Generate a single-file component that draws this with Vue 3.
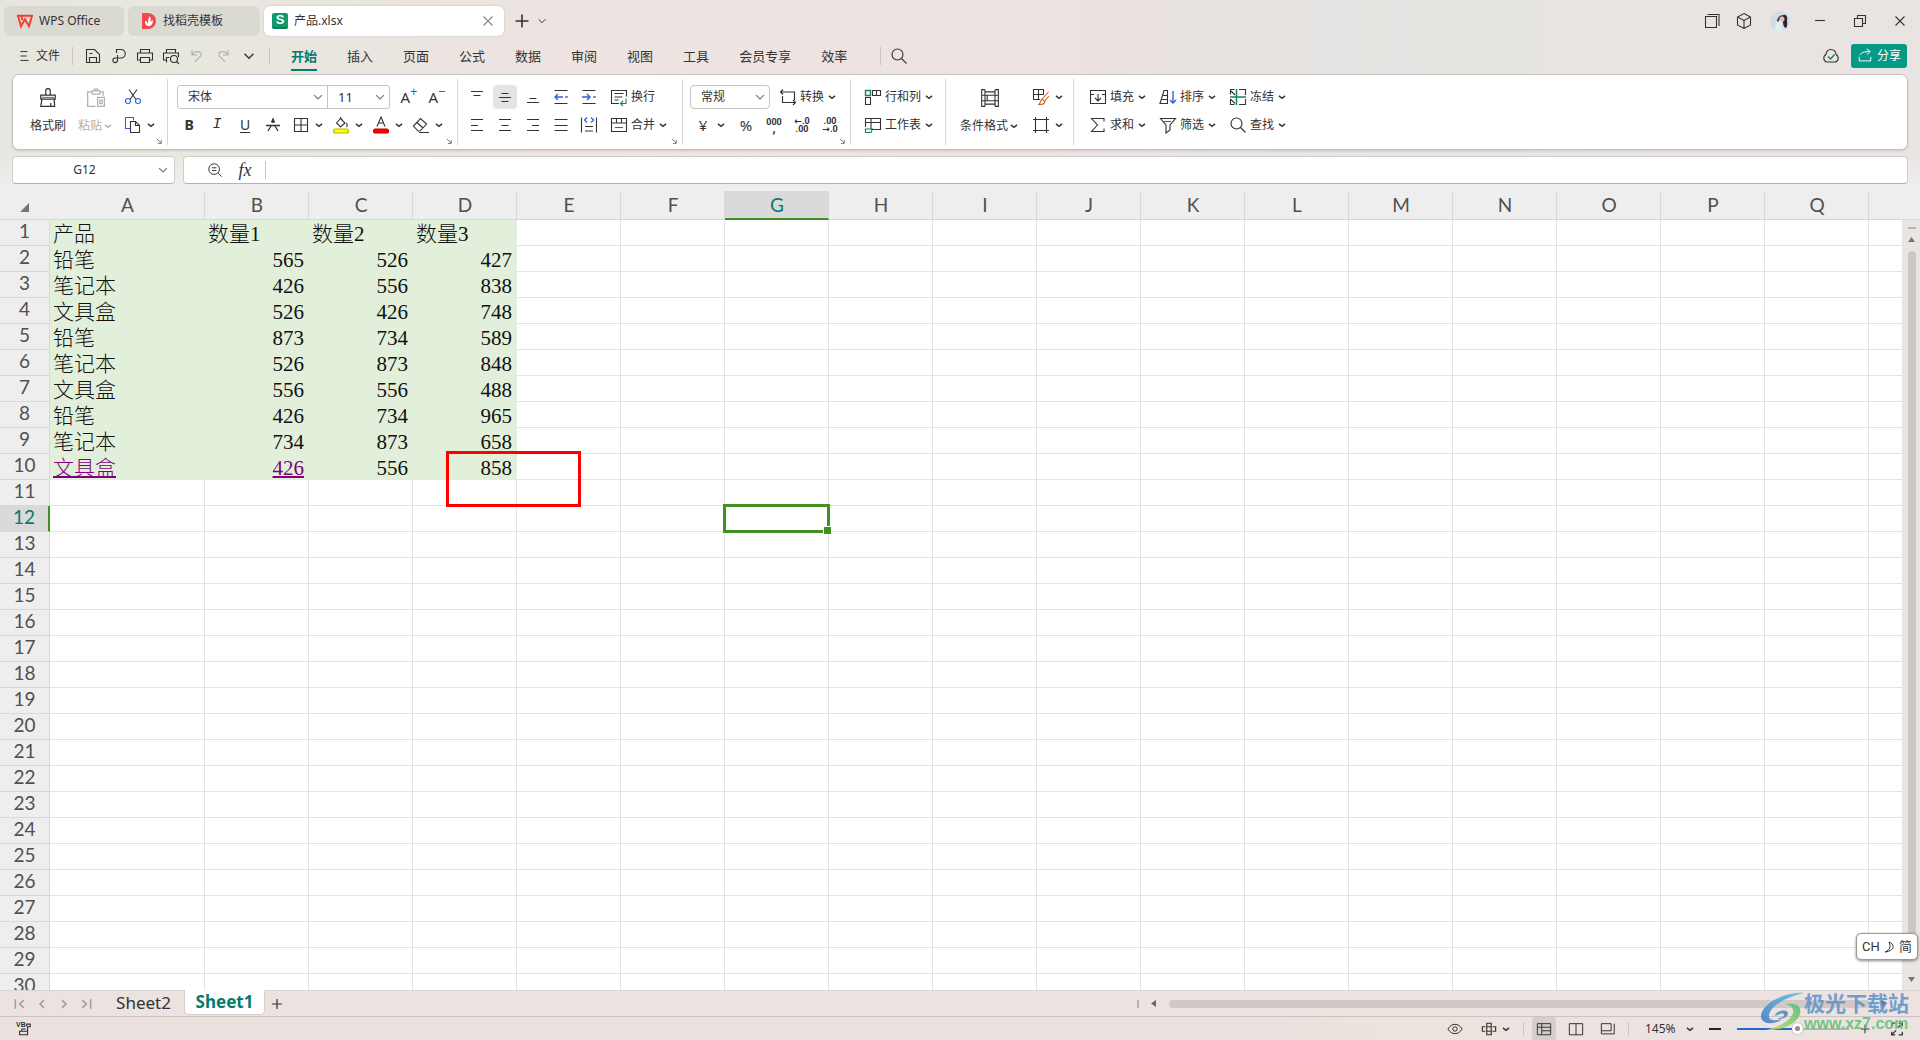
<script setup>
import { h, ref } from 'vue'

const G = '#12855f'
const B = '#2f62d9'

// Each glyph is drawn on an 18 x 18 grid.
const glyphs = {
  chev: '<path d="M3.500 7l5.500 4.500L14.500 7" stroke-width="2.600"/>',
  caret: '<path d="M4 6.500l5 5 5-5" stroke-width="1.500"/>',
  burger: '<path d="M5 4h8M5 9h7M5 14h9"/>',
  save: '<path d="M2.500 15.500v-13h8l5 5v8zM5.500 15.500v-5h7v5M5.500 6.500h3"/>',
  exportf: '<path d="M6.500 6V2.500h4.500a4 4 0 0 1 0 8.500H5a2.300 2.300 0 1 0 2.500 2.300V8"/>',
  print: '<path d="M4.500 6V2.500h9V6M4.500 13h-3V6h15v7h-3M4.500 10.500h9v5h-9z"/>',
  preview: '<path d="M4.500 6V2.500h9V6M5 13H1.500V6h15v4M4.500 15.500v-5h3"/><circle cx="12" cy="12" r="3.500"/><path d="M14.500 14.500l2.500 2.500"/>',
  undo: '<path d="M4 3v5h5M4 8c3-5 10-4 9 0-.500 2-3 3-6 7"/>',
  redo: '<path d="M14 3v5H9M14 8c-3-5-10-4-9 0 .500 2 3 3 6 7"/>',
  search: '<circle cx="7.500" cy="7.500" r="5.500"/><path d="M11.500 11.500l5 5"/>',
  plus: '<path d="M9 2.500v13M2.500 9h13" stroke-width="1.600"/>',
  close: '<path d="M4.500 4.500l9 9M13.500 4.500l-9 9"/>',
  min: '<path d="M4 8.500h10"/>',
  restore: '<path d="M3.500 6.500h8v8h-8zM6.500 6.500v-3h8v8h-3"/>',
  windows: '<path d="M2.500 4.500h11v11h-11zM4.500 2.500h11.500v11.500"/>',
  cube: '<path d="M9 1.500l6.500 3.500v8L9 16.500 2.500 13V5zM2.500 5L9 8.500 15.500 5M9 8.500v8"/>',
  cloud: `<path d="M5 15a4 4 0 0 1-1-7.500 5 5 0 0 1 10 0A4 4 0 0 1 13 15z"/><path d="M6 9.500l2.500 2.500 4-4.500" stroke="${G}" stroke-width="1.400"/>`,
  share: '<path d="M2.500 10v4.500h13V10M3 8c2-3 5-4 11-4M11 1l4 3-4 3.500"/>',
  cut: `<path d="M5 1.500l7 10M13 1.500l-7 10"/><g stroke="${B}"><circle cx="4" cy="13" r="2.500"/><circle cx="14" cy="13" r="2.500"/></g>`,
  copy: `<path d="M6 12.500H1.500v-11h8v3" stroke="${B}"/><path d="M6.500 5.500h5l4 4v7h-9zM11.500 5.500v4h4"/>`,
  grid: '<path d="M2.500 2.500h13v13h-13zM9 2.500v13M2.500 9h13"/>',
  fill: '<path d="M4.500 7l4-4.500 4.500 4.500-4.500 4zM8 1l3 4M14.500 7c1 2 1 3 0 4"/><rect x="1.500" y="13" width="15" height="4" rx="2" fill="#ff0" stroke="#b8b800"/>',
  color: '<path d="M5 10.500L9 1l4 9.500M6.500 7h5"/><rect x="1.500" y="13" width="15" height="4" rx="2" fill="#f00" stroke="#b00"/>',
  eraser: '<path d="M1.500 10l7-7.500 6 5.500-6.500 7H6zM5 6.500l6 5.500M7 16.500h10"/>',
  strikeA: '<path d="M4 15l3-5M9 7V5M14 15l-3-5M2 9.500h14M7.500 6.500L9 3l1.500 3.500" stroke-width="1.300"/>',
  top: '<path d="M3 3.500h12M5.500 7.500h7"/>',
  mid: '<path d="M5.500 5.500h7M3 9.500h12M5.500 13.500h7"/>',
  bottom: '<path d="M5.500 10.500h7M3 14.500h12"/>',
  left: '<path d="M3 3.500h12M3 9.500h7M3 14.500h12"/>',
  center: '<path d="M3 3.500h12M5.500 9.500h7M3 14.500h12"/>',
  right: '<path d="M3 3.500h12M8 9.500h7M3 14.500h12"/>',
  justify: '<path d="M2.500 3.500h13M2.500 9.500h13M2.500 14.500h13"/>',
  spread: `<path d="M1.500 1.500v15M16.500 1.500v15M5 10.500h8M5 15h8"/><path d="M7 1.500L4.500 4 7 6.500M11 1.500L13.500 4 11 6.500" stroke="${B}" stroke-width="1.300"/>`,
  outdent: `<path d="M2.500 2.500h13M2.500 15.500h13M13 9h3"/><path d="M11 9H3M6 6L3 9l3 3" stroke="${B}" stroke-width="1.400"/>`,
  indent: `<path d="M2.500 2.500h13M2.500 15.500h13M13 9h3"/><path d="M2 9h8M7 6l3 3-3 3" stroke="${B}" stroke-width="1.400"/>`,
  wrap: `<path d="M9 15.500H1.500v-13h15v6M4.500 5.500h9M4.500 9h8M4.500 12h4"/><path d="M16 10.500v5h-5M13 13l-2.500 2.500L13 18" stroke="${G}"/>`,
  merge: `<path d="M1.500 2.500h15v13h-15zM1.500 7h15M6.500 2.500V7M11.500 2.500V7"/><path d="M5 11.500h8" stroke="${G}"/>`,
  convert: '<path d="M4 1.500L1.500 4 4 6.500M1.500 4h14v8M3.500 8v6.500h13M14 12l2.500 2.500L14 17"/>',
  rowcol: `<path d="M1.500 2.500h5v5h-5z" stroke="${G}" stroke-width="1.400"/><path d="M8.500 2.500h8v5h-8zM12.500 2.500v5M1.500 9.500h5v7h-5z"/>`,
  sheet: `<path d="M7 13.500h9.500v-11h-15V11M1.500 6.500h15M7 2.500v11"/><path d="M1.500 13h7l-1.500 3.500H1.500z" stroke="${G}"/>`,
  cond: '<path d="M4.500 1.500h-3v15h3M13.500 1.500h3v15h-3M4.500 1.500v15M13.500 1.500v15M4.500 3.500h9M4.500 14.500h9M1.500 6.500h12M1.500 11.500h12M13.500 6.500h3M13.500 11.500h3M6.500 6.500v5" stroke-width="1"/>',
  style: '<path d="M8 11.500H1.500v-10h10V7M1.500 6.500h10M6.500 1.500v10"/><path d="M16.500 4l-6 6.500M17 8l-4 4.500M10 11l3 2.500c-1 3-3 3-6 3 2-2 1-4 3-5.500z" stroke="#c9642a"/>',
  frame: '<path d="M3.500 1v16M14.500 1v16M1 3.500h16M1 14.500h16"/>',
  infill: '<path d="M5 6.500H1.500v-4h15v4H13M1.500 6.500v9h15v-9M9 6v7M6 10l3 3 3-3"/>',
  sum: '<path d="M15 5.500V2.500H2.500l6 6.500-6 6.500H15v-3"/>',
  sort: `<path d="M1 15.500L5 2.500h3.500v13zM4 7.500h4.500M3 11.500h5.500"/><path d="M14 3v12M11 12l3 3 3-3" stroke="${B}" stroke-width="1.400"/>`,
  filter: `<path d="M1.500 2.500h15L11 9v5l-4 3V9z"/><path d="M5 5.500h7" stroke="${G}"/>`,
  freeze: `<path d="M1.500 6.500v-5h4M10 1.500h6.500V7M10 16.500h6.500V11M5.500 16.500h-4V11M2 3l4 4M2 11.500l4 4"/><path d="M7.500 1v16M1 9h16" stroke="${G}" stroke-width="1.500"/>`,
  brush: '<path d="M7 6.500V2.500a2 2 0 0 1 4 0v4M2.500 6.500h13V10h-13zM3.500 10l-1 6.500h12.500l-.500-6.500M11.500 16.500v-3"/><path d="M3.500 8.500h11" stroke="#d2622a"/>',
  paste: '<path d="M5.500 3.500H1.500v13h7M12.500 3.500h3V7M5.500 2.500h7v3h-7zM7.500 2.500V1h3v1.500M10.500 8.500h6v8h-6zM12.500 11h2v3h-2z"/>',
  zoomf: '<circle cx="8" cy="8" r="6"/><path d="M12.500 12.500l4 4M5.500 6.500h5M5.500 9.500h5"/>',
  corner: '<path d="M2 2l11 11M13.500 5v9H5" stroke-width="2.500"/>',
  first: '<path d="M3 3v12M14 4L8.500 9l5.500 5" stroke-width="2"/>',
  prev: '<path d="M11.500 4L6.500 9l5 5" stroke-width="2"/>',
  next: '<path d="M6.500 4l5 5-5 5" stroke-width="2"/>',
  last: '<path d="M15 3v12M4 4l5.500 5L4 14" stroke-width="2"/>',
  eye: '<path d="M1 9c4-7 12-7 16 0-4 7-12 7-16 0z"/><circle cx="9" cy="9" r="2.500"/>',
  cross: '<path d="M6.500 6V2.500h5V6M6.500 12v3.500h5V12M5 6.500H1.500v5H5M13 6.500h3.500v5H13M6.500 6.500h5v5h-5z" stroke-width="1.300"/>',
  vnormal: '<path d="M1.500 3h15v12.500h-15zM1.500 7h15M6.500 3v12.500M6.500 11h10"/>',
  vpage: '<path d="M1.500 3h15v12.500h-15zM9 3v12.500"/>',
  vread: '<path d="M1.500 3h11v8h-11zM16 3v11.500H1.500V11"/>',
  full: '<path d="M3 6V2.500h4M11 15.500h4V12M15 2.500l-5 5M11 2.500h4V6M3 15.500l5-5M3 12v3.500h4" stroke-width="1.400"/>',
  macro: '<path d="M12 6V3.500h4v3h-3v9H4v-4h9M6.500 11.500V9H11" stroke-width="1.300"/>',
  wps: '<path d="M1 3h16l-3.500 12L9 7l-4.500 8L1 3h4l1 5" stroke="#f2402f" stroke-width="2.200"/>'
}

const Icon = (props) =>
  h('svg', {
    viewBox: '0 0 18 18',
    width: props.size || 18,
    height: props.size || 18,
    fill: 'none',
    stroke: 'currentColor',
    'stroke-width': 1.1,
    'aria-hidden': 'true',
    innerHTML: glyphs[props.name]
  })
Icon.props = ['name', 'size']

const quick = ['save', 'exportf', 'print', 'preview']
const menus = ['开始', '插入', '页面', '公式', '数据', '审阅', '视图', '工具', '会员专享', '效率']
const columns = 'ABCDEFGHIJKLMNOPQ'.split('')
const data = [
  ['产品', '数量1', '数量2', '数量3'],
  ['铅笔', 565, 526, 427],
  ['笔记本', 426, 556, 838],
  ['文具盒', 526, 426, 748],
  ['铅笔', 873, 734, 589],
  ['笔记本', 526, 873, 848],
  ['文具盒', 556, 556, 488],
  ['铅笔', 426, 734, 965],
  ['笔记本', 734, 873, 658],
  ['文具盒', 426, 556, 858]
]
const cell = (r, c) => (data[r - 1] ? data[r - 1][c] : undefined)
const isLink = (r, c) => r === 10 && c < 2
const cellClass = (r, c) => ({
  filled: r <= 10 && c < 4,
  num: typeof cell(r, c) === 'number'
})
const zoom = ref(54)
const nameBox = ref('G12')
</script>

<template>
  <div class="app">
    <header class="titlebar">
      <button class="doc-tab t-home"><Icon name="wps" :size="16" />WPS Office</button>
      <button class="doc-tab t-shop"><svg viewBox="0 0 14 16" width="14" height="16"><path d="M0 0h6a8 8 0 0 1 0 16H0z" fill="#f2494f" /><path d="M3 8c2 0 2 1 3 3 0-3 0-5 2-8 1 3 1 4 0 6l3-2c0 4-2 6-4 6-3 0-4-2-4-5z" fill="#fff" /></svg>找稻壳模板</button>
      <div class="doc-tab t-file">
        <span class="s-logo">S</span>产品.xlsx
        <button class="tab-close" aria-label="关闭"><Icon name="close" /></button>
      </div>
      <button class="ib add" aria-label="新建"><Icon name="plus" /></button>
      <button class="ib narrow" aria-label="更多"><Icon name="caret" :size="12" /></button>
      <div class="grow"></div>
      <button class="ib w32" aria-label="窗口"><Icon name="windows" /></button>
      <button class="ib w32" aria-label="应用"><Icon name="cube" /></button>
      <button class="ib w40" aria-label="账号">
        <svg viewBox="0 0 20 20" width="20" height="20"><circle cx="10" cy="10" r="10" fill="#cfdde6" /><path d="M5 19c0-5 2-9 6-9l2 10z" fill="#e3eef3" /><path d="M12 5c3-3 6 0 5 4 0 3 1 5-1 8-3-1-3-5-3-8z" fill="#2c2430" /><path d="M7 10c0-3 3-6 6-6l-3 4-2 3z" fill="#4b3a42" /><circle cx="12" cy="8" r="2.500" fill="#e2bfb0" /></svg>
      </button>
      <button class="ib w40" aria-label="最小化"><Icon name="min" /></button>
      <button class="ib w40" aria-label="还原"><Icon name="restore" /></button>
      <button class="ib w40" aria-label="关闭窗口"><Icon name="close" /></button>
    </header>

    <nav class="menubar">
      <button class="file"><Icon name="burger" :size="16" />文件</button>
      <i class="bar"></i>
      <div class="quick">
        <button v-for="q in quick" :key="q" class="ib w26" :aria-label="q"><Icon :name="q" /></button>
        <button class="ib w26 dim" aria-label="撤销"><Icon name="undo" /></button>
        <button class="ib w26 dim" aria-label="恢复"><Icon name="redo" /></button>
        <button class="ib w26" aria-label="更多命令"><Icon name="caret" :size="16" /></button>
      </div>
      <i class="bar"></i>
      <div class="menus">
        <button v-for="(m, i) in menus" :key="m" :class="{ active: i === 0 }">{{ m }}</button>
      </div>
      <i class="bar"></i>
      <button class="ib w36" aria-label="搜索"><Icon name="search" /></button>
      <div class="grow"></div>
      <button class="ib w40" aria-label="已同步"><Icon name="cloud" /></button>
      <button class="share"><Icon name="share" :size="16" />分享</button>
    </nav>

    <section class="ribbon">
      <div class="group g-clip">
        <button class="big"><Icon name="brush" :size="20" /><span>格式刷</span></button>
        <button class="big dim"><Icon name="paste" :size="20" /><span>粘贴<Icon name="chev" :size="10" /></span></button>
        <div class="rows">
          <div class="row"><button class="ib w28" aria-label="剪切"><Icon name="cut" /></button></div>
          <div class="row"><button class="drop" aria-label="复制"><Icon name="copy" /><Icon name="chev" :size="10" /></button></div>
        </div>
        <Icon class="corner" name="corner" :size="7" />
      </div>
      <div class="group g-font">
        <div class="rows">
          <div class="row">
            <div class="fontbox">
              <label class="pick family"><select aria-label="字体"><option>宋体</option></select><Icon name="caret" :size="14" /></label>
              <label class="pick fsize"><select aria-label="字号"><option>11</option></select><Icon name="caret" :size="14" /></label>
            </div>
            <button class="ib w28 letter" aria-label="增大字号">A<sup>+</sup></button>
            <button class="ib w28 letter" aria-label="减小字号">A<sup>−</sup></button>
          </div>
          <div class="row">
            <button class="ib w28 fmt b">B</button>
            <button class="ib w28 fmt i">I</button>
            <button class="ib w28 fmt u">U</button>
            <button class="ib w28" aria-label="删除线"><Icon name="strikeA" /></button>
            <button v-for="k in ['grid', 'fill', 'color', 'eraser']" :key="k" class="drop" :aria-label="k"><Icon :name="k" /><Icon name="chev" :size="10" /></button>
          </div>
        </div>
        <Icon class="corner" name="corner" :size="7" />
      </div>
      <div class="group g-align">
        <div class="rows">
          <div class="row">
            <button v-for="k in ['top', 'mid', 'bottom', 'outdent', 'indent']" :key="k" class="ib w28" :aria-label="k"><span :class="{ on: k === 'mid' }"><Icon :name="k" /></span></button>
            <button class="lab"><Icon name="wrap" />换行</button>
          </div>
          <div class="row">
            <button v-for="k in ['left', 'center', 'right', 'justify', 'spread']" :key="k" class="ib w28" :aria-label="k"><Icon :name="k" /></button>
            <button class="lab"><Icon name="merge" />合并<Icon name="chev" :size="10" /></button>
          </div>
        </div>
        <Icon class="corner" name="corner" :size="7" />
      </div>
      <div class="group g-num">
        <div class="rows">
          <div class="row">
            <label class="pick kind"><select aria-label="数字格式"><option>常规</option></select><Icon name="caret" :size="14" /></label>
            <button class="lab"><Icon name="convert" />转换<Icon name="chev" :size="10" /></button>
          </div>
          <div class="row">
            <button class="drop money"><b>¥</b><Icon name="chev" :size="10" /></button>
            <button class="ib w28 pct">%</button>
            <button class="ib w28 tiny"><span>000</span><span class="comma">,</span></button>
            <button class="ib w28 tiny"><span>←.0</span><span>.00</span></button>
            <button class="ib w28 tiny"><span>.00</span><span>→.0</span></button>
          </div>
        </div>
        <Icon class="corner" name="corner" :size="7" />
      </div>
      <div class="group g-rc">
        <div class="rows">
          <button class="lab"><Icon name="rowcol" />行和列<Icon name="chev" :size="10" /></button>
          <button class="lab"><Icon name="sheet" />工作表<Icon name="chev" :size="10" /></button>
        </div>
      </div>
      <div class="group g-cond">
        <button class="big"><Icon name="cond" :size="20" /><span>条件格式<Icon name="chev" :size="10" /></span></button>
        <div class="rows">
          <button class="drop" aria-label="样式"><Icon name="style" /><Icon name="chev" :size="10" /></button>
          <button class="drop" aria-label="框"><Icon name="frame" /><Icon name="chev" :size="10" /></button>
        </div>
      </div>
      <div class="group g-edit">
        <div class="rows">
          <div class="row">
            <button class="lab"><Icon name="infill" />填充<Icon name="chev" :size="10" /></button>
            <button class="lab"><Icon name="sort" />排序<Icon name="chev" :size="10" /></button>
            <button class="lab"><Icon name="freeze" />冻结<Icon name="chev" :size="10" /></button>
          </div>
          <div class="row">
            <button class="lab"><Icon name="sum" />求和<Icon name="chev" :size="10" /></button>
            <button class="lab"><Icon name="filter" />筛选<Icon name="chev" :size="10" /></button>
            <button class="lab"><Icon name="search" />查找<Icon name="chev" :size="10" /></button>
          </div>
        </div>
      </div>
    </section>

    <section class="formula">
      <div class="namebox"><input v-model="nameBox" aria-label="名称框" /><Icon name="caret" :size="14" /></div>
      <div class="fx">
        <button class="ib w28" aria-label="查看"><Icon name="zoomf" :size="16" /></button>
        <button class="ib w32 fxi">fx</button>
        <i class="bar"></i>
        <input class="grow" aria-label="编辑栏" />
      </div>
    </section>

    <main class="work">
      <div class="sheet">
        <table>
          <colgroup><col class="c-row" /><col class="c-a" /><col v-for="c in 16" :key="c" class="c-n" /><col /></colgroup>
          <thead>
            <tr>
              <th class="all"><svg width="9" height="9" viewBox="0 0 9 9"><path d="M9 0v9H0z" fill="#767676" /></svg></th>
              <th v-for="c in columns" :key="c" :class="{ sel: c === 'G' }">{{ c }}</th>
              <th></th>
            </tr>
          </thead>
          <tbody>
            <tr v-for="r in 30" :key="r">
              <th :class="{ sel: r === 12 }">{{ r }}</th>
              <td v-for="(c, i) in columns" :key="c" :class="cellClass(r, i)"><a v-if="isLink(r, i)" href="#">{{ cell(r, i) }}</a><template v-else>{{ cell(r, i) }}</template></td>
              <td></td>
            </tr>
          </tbody>
        </table>
        <div class="cursor"></div>
        <div class="mark"></div>
      </div>
      <div class="vscroll">
        <i class="split"></i>
        <svg width="7" height="6" viewBox="0 0 7 6"><path d="M0 5l3.500-5L7 5z" fill="#777" /></svg>
        <i class="thumb"></i>
        <svg width="7" height="6" viewBox="0 0 7 6"><path d="M0 0l3.500 5L7 0z" fill="#777" /></svg>
      </div>
    </main>

    <footer class="tabs">
      <div class="navs">
        <button v-for="k in ['first', 'prev', 'next', 'last']" :key="k" :aria-label="k"><Icon :name="k" :size="14" /></button>
      </div>
      <button class="st">Sheet2</button>
      <button class="st cur">Sheet1</button>
      <button class="ib w24" aria-label="新建工作表"><Icon name="plus" :size="14" /></button>
      <div class="grow"></div>
      <div class="hscroll">
        <i class="split"></i>
        <svg width="6" height="7" viewBox="0 0 6 7"><path d="M5 0L0 3.500 5 7z" fill="#666" /></svg>
        <i class="thumb"></i>
        <svg width="6" height="7" viewBox="0 0 6 7"><path d="M0 0l5 3.500L0 7z" fill="#666" /></svg>
        <i class="split"></i>
      </div>
    </footer>

    <footer class="status">
      <button class="vb" aria-label="宏"><span>VB</span><Icon name="macro" :size="16" /></button>
      <div class="grow"></div>
      <button class="ib w32" aria-label="护眼"><Icon name="eye" :size="16" /></button>
      <button class="drop" aria-label="定位"><Icon name="cross" :size="16" /><Icon name="chev" :size="10" /></button>
      <i class="bar"></i>
      <button class="ib w32" aria-label="普通视图"><span class="on"><Icon name="vnormal" :size="16" /></span></button>
      <button class="ib w32" aria-label="分页预览"><Icon name="vpage" :size="16" /></button>
      <button class="ib w32" aria-label="阅读布局"><Icon name="vread" :size="16" /></button>
      <i class="bar"></i>
      <button class="pctv">145%<Icon name="chev" :size="10" /></button>
      <button class="ib w40" aria-label="缩小"><i class="minus"></i></button>
      <input v-model="zoom" class="zoom" type="range" min="0" max="100" aria-label="缩放" />
      <button class="ib w28" aria-label="放大"><Icon name="plus" :size="12" /></button>
      <button class="ib w36" aria-label="全屏"><Icon name="full" :size="16" /></button>
    </footer>

    <div class="ime"><span>CH</span><svg width="11" height="12" viewBox="0 0 11 12"><path d="M5 1c6 2 6 9-4 10 5-2 6-5 4-10z" fill="none" stroke="#333" /></svg><span>简</span></div>
    <div class="water">
      <svg width="44" height="40" viewBox="0 0 44 40">
        <defs>
          <linearGradient id="wa" x1="0" y1="1" x2="1" y2="0"><stop offset="0" stop-color="#3f78c4" /><stop offset="1" stop-color="#5bc0ee" /></linearGradient>
          <linearGradient id="wb" x1="0" y1="1" x2="1" y2="0"><stop offset="0" stop-color="#c9dc5a" /><stop offset="1" stop-color="#4bbd7a" /></linearGradient>
        </defs>
        <path d="M44 1C26-1 0 12 1 25c1 8 15 8 21 2-6 2-14 2-13-4C11 13 27 5 44 1z" fill="url(#wa)" />
        <path d="M15 24c1-6 14-8 13-2-1 4-7 6-11 4 4 0 7-1 7-3 0-3-5-1-9 1z" fill="#4b86c8" />
        <path d="M26 12c10-1 16 2 14 10C37 32 22 39 6 38c12-3 25-9 27-17 1-5-2-7-7-9z" fill="url(#wb)" />
      </svg>
      <p><strong>极光下载站</strong><span>www.xz7.com</span></p>
    </div>
  </div>
</template>

<style>
html,
body {
  margin: 0;
  overflow: hidden;
}
</style>

<style scoped>
* {
  box-sizing: border-box;
}
.app {
  position: relative;
  height: 100vh;
  display: flex;
  flex-direction: column;
  overflow: hidden;
  color: #333;
  font: 12px/16px 'Noto Sans', 'Noto Sans CJK SC', sans-serif;
  background: linear-gradient(90deg, #e6e6e0 0, #e8e8de 7%, #e9e5df 18%, #eee4e2 30%, #ece2e0 56%, #e8e3e0 62%, #e4e4e2 73%, #e9e4e1 86%);
}
button {
  font: inherit;
  color: inherit;
  border: 0;
  background: none;
  padding: 0;
  margin: 0;
  display: flex;
  align-items: center;
  white-space: nowrap;
}
svg {
  flex: none;
  display: block;
}
input {
  font: inherit;
  color: inherit;
  border: 0;
  outline: 0;
  background: none;
  padding: 0;
  min-width: 0;
}
.grow {
  flex: 1;
}
.ib {
  justify-content: center;
  height: 24px;
  flex: none;
}
.w24 { width: 24px; }
.w26 { width: 26px; }
.w28 { width: 28px; }
.w32 { width: 32px; }
.w36 { width: 36px; }
.w40 { width: 40px; }
.dim {
  color: #b0b0ac;
}
.bar {
  width: 1px;
  height: 18px;
  flex: none;
  background: #c9c6c2;
}

.titlebar {
  display: flex;
  align-items: center;
  height: 42px;
  padding-left: 4px;
  flex: none;
}
.doc-tab {
  display: flex;
  align-items: center;
  height: 30px;
  margin-right: 4px;
  border-radius: 6px;
  background: #dadad3;
}
.t-home {
  width: 120px;
  gap: 6px;
  padding-left: 13px;
}
.t-shop {
  width: 132px;
  gap: 7px;
  padding-left: 14px;
}
.t-file {
  width: 240px;
  gap: 6px;
  padding-left: 8px;
  background: #fff;
  box-shadow: 0 0 2px #bbb6b2;
}
.s-logo {
  width: 16px;
  height: 16px;
  border-radius: 2px;
  background: #119a68;
  border-bottom: 2px solid #087a50;
  color: #fff;
  font: bold 13px/14px 'Liberation Sans', sans-serif;
  text-align: center;
}
.tab-close {
  margin-left: auto;
  margin-right: 7px;
  color: #888;
}
.add {
  width: 28px;
}
.narrow {
  width: 12px;
}

.menubar {
  display: flex;
  align-items: center;
  height: 28px;
  margin-bottom: 4px;
  padding: 0 13px 0 16px;
  flex: none;
}
.file {
  gap: 4px;
  width: 56px;
}
.quick {
  display: flex;
  padding: 0 7px;
}
.menus {
  display: flex;
  gap: 30px;
  padding: 0 33px 0 21px;
  font-size: 13px;
  line-height: 26px;
}
.menus .active {
  color: #067a6c;
  font-weight: bold;
  box-shadow: 0 2px #067a6c;
}
.share {
  width: 56px;
  height: 24px;
  gap: 4px;
  justify-content: center;
  border-radius: 3px;
  background: #049a86;
  color: #fff;
}

.ribbon {
  display: flex;
  height: 76px;
  margin: 0 12px;
  flex: none;
  background: #fff;
  border: 1px solid #c8c5c2;
  border-radius: 7px;
  box-shadow: 0 1px 2px #0002;
}
.group {
  position: relative;
  display: flex;
  margin: 4px 0;
  padding: 6px 8px 0 6px;
  border-right: 1px solid #d8d8d8;
}
.group:last-child {
  border: 0;
}
.g-clip {
  padding-left: 17px;
  gap: 12px;
}
.g-clip .rows {
  margin-left: -6px;
}
.g-font {
  padding-left: 7px;
  padding-right: 6px;
}
.g-align {
  padding-left: 5px;
  padding-right: 9px;
}
.g-num {
  padding-right: 6px;
}
.g-rc {
  padding-left: 6px;
  padding-right: 11px;
}
.g-cond {
  padding-left: 14px;
  padding-right: 6px;
  gap: 8px;
}
.g-edit {
  padding-left: 8px;
}
.rows {
  display: flex;
  flex-direction: column;
  gap: 4px;
}
.row {
  display: flex;
  align-items: center;
  height: 24px;
}
.big {
  flex-direction: column;
  justify-content: space-between;
  height: 51px;
  padding: 3px 0 2px;
}
.big span {
  display: flex;
  align-items: center;
  gap: 1px;
}
.drop {
  width: 40px;
  height: 24px;
  gap: 4px;
  padding-left: 5px;
}
.lab {
  height: 24px;
  gap: 3px;
  padding-left: 7px;
  min-width: 70px;
}
.corner {
  position: absolute;
  right: 4px;
  bottom: 0;
  color: #777;
}
.fontbox {
  display: flex;
  width: 213px;
  height: 24px;
  margin: 0 5px 0 2px;
  border: 1px solid #c4c4c4;
  border-radius: 3px;
}
.pick {
  position: relative;
  display: flex;
  align-items: center;
}
.pick select {
  appearance: none;
  width: 100%;
  height: 100%;
  border: 0;
  background: none;
  padding: 0 10px;
  font: inherit;
  color: inherit;
}
.pick svg {
  position: absolute;
  right: 2px;
  color: #777;
}
.family {
  flex: 1;
  border-right: 1px solid #c4c4c4;
}
.fsize {
  width: 61px;
  font-size: 13px;
}
.kind {
  width: 80px;
  height: 24px;
  margin-left: 1px;
  margin-right: 2px;
  border: 1px solid #c4c4c4;
  border-radius: 4px;
}
.letter {
  font-size: 15px;
}
.letter sup {
  color: #2f62d9;
  font-size: 13px;
  line-height: 8px;
  align-self: flex-start;
  margin-top: 2px;
}
.fmt {
  font-size: 14px;
}
.b {
  font-weight: bold;
}
.i {
  font-family: 'Liberation Mono', monospace;
  font-style: italic;
  font-size: 15px;
}
.u {
  text-decoration: underline;
  text-underline-offset: 2px;
}
.on {
  display: flex;
  align-items: center;
  justify-content: center;
  width: 24px;
  height: 24px;
  border-radius: 4px;
  background: #e4e4e4;
}
.money {
  margin-right: 3px;
}
.money b {
  width: 18px;
  font-weight: normal;
  font-size: 15px;
}
.pct {
  font-size: 15px;
}
.tiny {
  flex-direction: column;
  font: bold 9px/8px Roboto, 'DejaVu Sans', sans-serif;
}
.comma {
  font-size: 12px;
  line-height: 6px;
}

.formula {
  display: flex;
  gap: 8px;
  flex: none;
  height: 41px;
  padding: 6px 12px 7px;
  background: linear-gradient(#eee0, #eee 90%);
}
.namebox,
.fx {
  display: flex;
  align-items: center;
  background: #fff;
  border: 1px solid #d0cecb;
  border-bottom-color: #b5b3b1;
  border-radius: 4px;
}
.namebox {
  width: 163px;
  padding-right: 4px;
}
.namebox input {
  flex: 1;
  text-align: center;
}
.namebox svg {
  color: #777;
}
.fx {
  flex: 1;
  padding-left: 17px;
}
.fxi {
  font: italic 18px/18px 'Liberation Serif', serif;
  margin-right: 4px;
}

.work {
  display: flex;
  flex: 1;
  min-height: 0;
  background: #eee;
}
.sheet {
  position: relative;
  flex: 1;
  min-width: 0;
  overflow: hidden;
  background: #fff;
}
table {
  width: 100%;
  table-layout: fixed;
  border-collapse: separate;
  border-spacing: 0;
}
.c-row { width: 50px; }
.c-a { width: 155px; }
.c-n { width: 104px; }
th,
td {
  height: 26px;
  padding: 0;
  border-right: 1px solid #e3e3e3;
  border-bottom: 1px solid #e3e3e3;
  overflow: hidden;
  white-space: nowrap;
}
th {
  background: #eee;
  border-color: #d8d8d8;
  color: #505050;
  font: 19px/22px Lato, sans-serif;
}
thead th {
  height: 29px;
  line-height: 28px;
  padding-left: 1px;
}
thead th:last-child {
  border-right: 0;
}
tbody th {
  padding-bottom: 3px;
}
thead .all {
  border-right-color: #eee;
  padding: 4px 0 0 20px;
}
.sel {
  background: #dadada;
  color: #067a6c;
}
thead .sel {
  border-bottom: 2px solid #40911f;
  line-height: 27px;
}
tbody .sel {
  border-right: 2px solid #40911f;
}
td {
  padding: 3px 4px 0 3px;
  color: #111;
  font: 300 21px/22px 'Liberation Serif', 'Noto Sans CJK SC', serif;
}
.filled {
  background: #e2efda;
  border-color: #e2efda;
}
.num {
  text-align: right;
}
td a {
  color: #800080;
  text-underline-offset: 1px;
}
.cursor {
  position: absolute;
  left: 723px;
  top: 313px;
  width: 107px;
  height: 29px;
  border: 3px solid #40911f;
}
.cursor::after {
  content: '';
  position: absolute;
  right: -5px;
  bottom: -5px;
  width: 7px;
  height: 7px;
  background: #40911f;
  border: 1px solid #fff;
}
.mark {
  position: absolute;
  left: 446px;
  top: 260px;
  width: 135px;
  height: 56px;
  border: 3px solid #f00;
}
.vscroll {
  width: 17px;
  display: flex;
  flex-direction: column;
  align-items: center;
  gap: 8px;
  margin-top: 28px;
  padding: 7px 0;
  border-top: 1px solid #d8d8d8;
  background: #ebe5e2;
}
.vscroll .split {
  width: 8px;
  height: 2px;
  background: #b8b2b0;
}
.vscroll .thumb {
  flex: 1;
  width: 8px;
  border-radius: 4px;
  margin-bottom: 24px;
  background: #cdc8c6;
}

.tabs {
  display: flex;
  align-items: center;
  height: 27px;
  flex: none;
  border-top: 1px solid #d8d4d2;
  border-bottom: 1px solid #cdc4c2;
  background: #ece2e0;
}
.navs {
  display: flex;
  gap: 8px;
  padding-left: 13px;
  width: 103px;
  color: #a39d9b;
}
.st {
  justify-content: center;
  width: 81px;
  height: 23px;
  align-self: flex-start;
  font-size: 17px;
}
.cur {
  margin-top: -1px;
  height: 25px;
  background: #fff;
  border: 1px solid #d5d0ce;
  border-top: 0;
  border-radius: 0 0 5px 5px;
  color: #067a6c;
  font-weight: bold;
}
.hscroll {
  display: flex;
  align-items: center;
  gap: 12px;
  width: calc(41% - 4px);
  padding-right: 18px;
}
.hscroll .split {
  width: 2px;
  height: 8px;
  background: #b8b2b0;
}
.hscroll .thumb {
  flex: 1;
  height: 8px;
  border-radius: 4px;
  background: #d0c9c6;
}
.status {
  display: flex;
  align-items: center;
  height: 23px;
  flex: none;
  padding-right: 5px;
  background: linear-gradient(90deg, #ebe1df 65%, #ece3dc 72%, #ece3e1 80%);
}
.vb {
  position: relative;
  margin-left: 16px;
}
.vb span {
  position: absolute;
  left: 0;
  top: 0;
  font: bold 7px/7px 'Liberation Sans', sans-serif;
}
.status .drop {
  width: 48px;
  padding-left: 10px;
}
.status .bar {
  height: 14px;
  margin: 0 4px;
}
.status .on {
  background: #d6cecb;
}
.pctv {
  gap: 9px;
  margin-left: 12px;
  width: 50px;
}
.minus {
  width: 12px;
  height: 2px;
  background: #222;
}
.zoom {
  appearance: none;
  width: 112px;
  height: 2px;
  background: linear-gradient(90deg, #2468cf 54%, #bdb4b2 54%);
}
.zoom::-webkit-slider-thumb {
  appearance: none;
  width: 11px;
  height: 11px;
  border-radius: 50%;
  background: #8c8c8c;
  border: 3px solid #fff;
  box-shadow: 0 0 1px #666;
}

.ime {
  position: absolute;
  right: 2px;
  bottom: 80px;
  width: 62px;
  height: 27px;
  display: flex;
  align-items: center;
  justify-content: space-between;
  padding: 0 5px;
  background: #fff;
  border: 1px solid #999;
  border-radius: 5px;
  box-shadow: 0 1px 3px #0007;
  font: 13px/18px Roboto, 'Noto Sans CJK SC', sans-serif;
}
.water {
  position: absolute;
  right: 10px;
  bottom: 8px;
  display: flex;
  align-items: flex-end;
  opacity: 0.85;
}
.water p {
  margin: 0;
  width: 106px;
  display: flex;
  flex-direction: column;
  gap: 3px;
}
.water strong {
  font: bold 21px/22px 'Noto Sans CJK SC', sans-serif;
  color: #5b93cc;
}
.water span {
  font: bold 16px/16px 'Liberation Sans', sans-serif;
  color: #5fbf77;
}
</style>
